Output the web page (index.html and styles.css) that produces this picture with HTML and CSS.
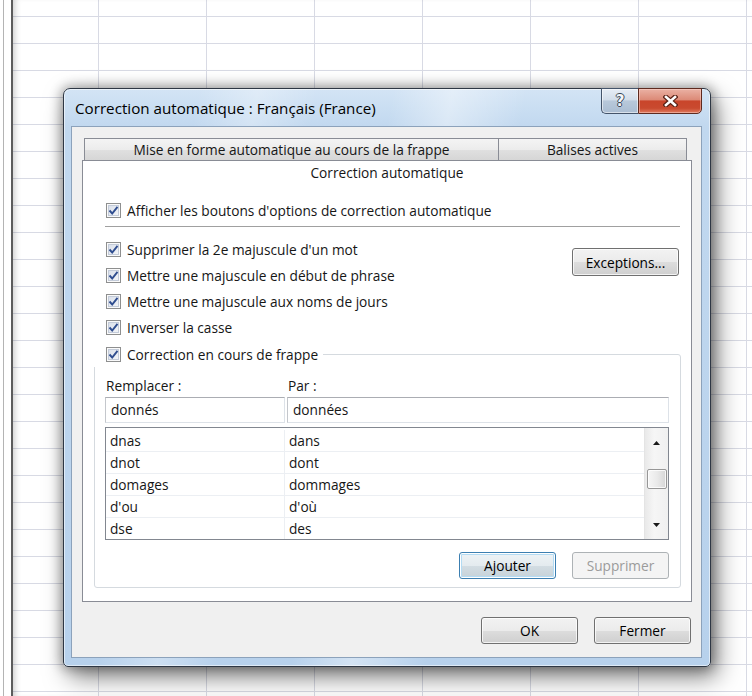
FILE: index.html
```html
<!DOCTYPE html>
<html lang="fr">
<head>
<meta charset="utf-8">
<title>Correction automatique</title>
<link rel="stylesheet" href="styles.css">
</head>
<body>
<div class="desktop">
  <div class="edge"></div>
  <div class="sheet"></div>

  <div class="dialog">
    <div class="titlebar">
      <span class="title">Correction automatique : Français (France)</span>
      <div class="caption">
        <div class="cap-btn cap-help"><span class="q">?</span></div>
        <div class="cap-btn cap-close">
          <svg width="15" height="12" viewBox="0 0 15 12"><path d="M3 2 L12 10 M12 2 L3 10" stroke="#5a2216" stroke-width="5" stroke-linecap="square" fill="none"/><path d="M3 2 L12 10 M12 2 L3 10" stroke="#ffffff" stroke-width="2.6" stroke-linecap="square" fill="none"/></svg>
        </div>
      </div>
    </div>

    <div class="client">
      <div class="tabs">
        <div class="tabrow">
          <div class="tab tab-1">Mise en forme automatique au cours de la frappe</div>
          <div class="tab tab-2">Balises actives</div>
        </div>
        <div class="panel">
          <div class="seltab">Correction automatique</div>
          <div class="pbody">
            <div class="chk first"><span class="box"><svg width="11" height="11" viewBox="0 0 11 11"><path d="M1.5 5.5 L4.2 8.5 L9.5 1.8" fill="none" stroke="#2f4d8f" stroke-width="1.9"/></svg></span><span>Afficher les boutons d'options de correction automatique</span></div>
            <div class="sep"></div>
            <div class="opts">
              <div class="opt-list">
                <div class="chk"><span class="box"><svg width="11" height="11" viewBox="0 0 11 11"><path d="M1.5 5.5 L4.2 8.5 L9.5 1.8" fill="none" stroke="#2f4d8f" stroke-width="1.9"/></svg></span><span>Supprimer la 2e majuscule d'un mot</span></div>
                <div class="chk"><span class="box"><svg width="11" height="11" viewBox="0 0 11 11"><path d="M1.5 5.5 L4.2 8.5 L9.5 1.8" fill="none" stroke="#2f4d8f" stroke-width="1.9"/></svg></span><span>Mettre une majuscule en début de phrase</span></div>
                <div class="chk"><span class="box"><svg width="11" height="11" viewBox="0 0 11 11"><path d="M1.5 5.5 L4.2 8.5 L9.5 1.8" fill="none" stroke="#2f4d8f" stroke-width="1.9"/></svg></span><span>Mettre une majuscule aux noms de jours</span></div>
                <div class="chk"><span class="box"><svg width="11" height="11" viewBox="0 0 11 11"><path d="M1.5 5.5 L4.2 8.5 L9.5 1.8" fill="none" stroke="#2f4d8f" stroke-width="1.9"/></svg></span><span>Inverser la casse</span></div>
              </div>
              <button class="btn btn-exc">Exceptions...</button>
            </div>

            <div class="group">
              <div class="chk legend"><span class="box"><svg width="11" height="11" viewBox="0 0 11 11"><path d="M1.5 5.5 L4.2 8.5 L9.5 1.8" fill="none" stroke="#2f4d8f" stroke-width="1.9"/></svg></span><span>Correction en cours de frappe</span></div>
              <div class="labels"><span class="lbl-1">Remplacer :</span><span class="lbl-2">Par :</span></div>
              <div class="inputs">
                <div class="input in-1">donnés</div>
                <div class="input in-2">données</div>
              </div>
              <div class="list">
                <div class="rows">
                  <div class="row"><span class="c1">dnas</span><span class="c2">dans</span></div>
                  <div class="row"><span class="c1">dnot</span><span class="c2">dont</span></div>
                  <div class="row"><span class="c1">domages</span><span class="c2">dommages</span></div>
                  <div class="row"><span class="c1">d'ou</span><span class="c2">d'où</span></div>
                  <div class="row"><span class="c1">dse</span><span class="c2">des</span></div>
                </div>
                <div class="scroll">
                  <div class="sb-up"><svg width="7" height="4" viewBox="0 0 7 4"><path d="M0 4 L3.5 0 L7 4 Z" fill="#1a1a1a"/></svg></div>
                  <div class="thumb"></div>
                  <div class="sb-fill"></div>
                  <div class="sb-down"><svg width="7" height="4" viewBox="0 0 7 4"><path d="M0 0 L3.5 4 L7 0 Z" fill="#1a1a1a"/></svg></div>
                </div>
              </div>
              <div class="grp-btns">
                <button class="btn btn-default">Ajouter</button>
                <button class="btn" disabled>Supprimer</button>
              </div>
            </div>
          </div>
        </div>
      </div>
      <div class="footer">
        <button class="btn">OK</button>
        <button class="btn">Fermer</button>
      </div>
    </div>
  </div>
</div>
</body>
</html>
```

FILE: styles.css
```css
* { box-sizing: border-box; }
html, body { margin: 0; padding: 0; }
body {
  width: 752px;
  height: 696px;
  overflow: hidden;
  font-family: "Open Sans", "Noto Sans", sans-serif;
  font-size: 13.7px;
  color: #161616;
}

.desktop {
  position: relative;
  display: flex;
  width: 752px;
  height: 696px;
  background: #fff;
}
.edge {
  width: 13px;
  flex: none;
  background: linear-gradient(to right, #fff 0 3px, #b4b4b4 3px 4px, #fff 4px 11px, #5c5c5c 11px 13px);
}
.sheet {
  flex: 1;
  background-color: #fff;
  background-image:
    linear-gradient(to right, #d8dae4 1px, transparent 1px),
    linear-gradient(to bottom, #d8dae4 1px, transparent 1px);
  background-size: 108px 100%, 100% 27px;
  background-position: 85px 0, 0 16px;
  box-shadow: inset 6px 0 6px -4px rgba(0,0,0,.2);
}

/* ---------- dialog window ---------- */
.dialog {
  position: absolute;
  left: 63px;
  top: 88px;
  width: 648px;
  height: 579px;
  border: 1px solid #2e3744;
  border-radius: 7px 7px 5px 5px;
  background:
    linear-gradient(100deg, rgba(255,255,255,0) 18%, rgba(255,255,255,.3) 26%, rgba(255,255,255,0) 34%, rgba(255,255,255,0) 44%, rgba(255,255,255,.4) 52%, rgba(255,255,255,0) 62%),
    linear-gradient(to bottom, #d3e4f5 0, #c1d8ef 38px, #b7d1ec 100%);
  box-shadow: 0 0 12px 2px rgba(0,0,0,.32), 6px 10px 24px rgba(0,0,0,.5), inset 0 0 0 1px rgba(255,255,255,.55);
  display: flex;
  flex-direction: column;
}
.titlebar {
  height: 37px;
  flex: none;
  display: flex;
  align-items: center;
  padding-left: 11px;
}
.title {
  font-size: 15.2px;
  color: #000;
}
.caption {
  margin-left: auto;
  margin-right: 8px;
  margin-top: -1px;
  align-self: flex-start;
  display: flex;
  height: 26px;
}
.cap-btn {
  height: 26px;
  display: flex;
  align-items: center;
  justify-content: center;
  border: 1px solid #44546a;
}
.cap-help {
  width: 37px;
  border-right: none;
  border-radius: 0 0 0 5px;
  background: linear-gradient(to bottom, #e6edf5 0, #d2dde9 45%, #b8c8da 50%, #aabdd2 100%);
  box-shadow: inset 0 0 0 1px rgba(255,255,255,.55);
}
.q {
  font-family: "DejaVu Sans", sans-serif;
  font-weight: bold;
  font-size: 15px;
  color: #f4f6f9;
  text-shadow: 1px 0 0 #3a4656, -1px 0 0 #3a4656, 0 1px 0 #3a4656, 0 -1px 0 #3a4656;
  line-height: 1;
}
.cap-close {
  width: 64px;
  border-color: #5e2a1f;
  border-radius: 0 0 5px 0;
  background: linear-gradient(to bottom, #eab1a4 0, #dc8a77 45%, #c9452b 50%, #c94a2f 80%, #e07b5f 100%);
  box-shadow: inset 0 0 0 1px rgba(255,220,210,.45);
}

/* ---------- client area ---------- */
.client {
  flex: 1;
  margin: 0 8px 8px 7px;
  border: 1px solid #8ca2bb;
  background: #f0f0f0;
  display: flex;
  flex-direction: column;
}
.tabs {
  margin: 11px 9px 0 10px;
}
.tabrow {
  display: flex;
  height: 22px;
  margin-left: 2px;
}
.tab {
  border: 1px solid #898c95;
  border-bottom: none;
  background: linear-gradient(to bottom, #f4f4f4 0, #ececec 50%, #e0e0e0 51%, #d6d6d6 100%);
  text-align: center;
  line-height: 21px;
  white-space: nowrap;
}
.tab-1 { width: 415px; }
.tab-2 { width: 189px; margin-left: -1px; }

.panel {
  height: 442px;
  border: 1px solid #898c95;
  background: #fff;
  display: flex;
  flex-direction: column;
}
.seltab {
  height: 24px;
  line-height: 24px;
  text-align: center;
}
.pbody {
  padding: 12px 10px 0 11px;
}

/* checkboxes */
.chk {
  display: flex;
  align-items: center;
  height: 26px;
  padding-left: 12px;
  white-space: nowrap;
}
.box {
  width: 15px;
  height: 15px;
  flex: none;
  margin-right: 6px;
  border: 1px solid #8e8f8f;
  background: #f5f5f5;
  display: flex;
  align-items: center;
  justify-content: center;
  box-shadow: inset 0 0 0 1px #fafafa, inset 0 0 0 2px #c3cbd9;
  background-image: linear-gradient(135deg, #d5dce8, #f7f8fa);
}
.box svg { display: block; }

.sep {
  height: 2px;
  margin: 3px 1px 8px 11px;
  border-top: 1px solid #a0a0a0;
  border-bottom: 1px solid #fff;
}
.opts {
  display: flex;
  justify-content: space-between;
  align-items: flex-start;
}
.opt-list { display: flex; flex-direction: column; }

/* buttons */
.btn {
  width: 97px;
  height: 27px;
  padding: 0;
  font: inherit;
  color: #000;
  border: 1px solid #707070;
  border-radius: 3px;
  background: linear-gradient(to bottom, #f2f2f2 0, #ebebeb 50%, #dddddd 51%, #cfcfcf 100%);
  box-shadow: inset 0 0 0 1px rgba(255,255,255,.75);
}
.btn-exc {
  width: 107px;
  height: 28px;
  margin-top: 12px;
  margin-right: 2px;
}
.btn-default {
  border-color: #3c7fb1;
  background: linear-gradient(to bottom, #eef3f6 0, #e4ebef 50%, #d3dde3 51%, #c6d2d9 100%);
  box-shadow: inset 0 0 0 1px #ffffff, inset 0 0 0 2px #b3dbf3;
}
.btn:disabled {
  border-color: #adb2b5;
  background: #f4f4f4;
  color: #9b9b9b;
  box-shadow: none;
}

/* group box */
.group {
  position: relative;
  margin-top: 14px;
  height: 234px;
  border: 1px solid #d5dadf;
  border-radius: 3px;
  padding: 20px 11px 0 10px;
}
.legend {
  position: absolute;
  top: -14px;
  left: -1px;
  height: 26px;
  padding-left: 12px;
  padding-right: 5px;
  background: #fff;
}
.labels {
  display: flex;
  height: 20px;
  align-items: center;
}
.lbl-1 { width: 183px; padding-left: 1px; }
.inputs {
  display: flex;
  margin-top: 2px;
  height: 26px;
}
.input {
  height: 26px;
  line-height: 24px;
  padding-left: 5px;
  background: #fff;
  border: 1px solid #dde2e8;
  border-top-color: #abadb3;
  border-left-color: #c4c7cc;
}
.in-1 { width: 180px; }
.in-2 { flex: 1; margin-left: 2px; }

.list {
  margin-top: 4px;
  height: 113px;
  border: 1px solid #828790;
  display: flex;
  background: #fff;
}
.rows {
  flex: 1;
  overflow: hidden;
  padding-top: 2px;
}
.row {
  display: flex;
  height: 22px;
  line-height: 21px;
  border-bottom: 1px solid #eceff3;
}
.row:last-child { height: 21px; border-bottom: none; }
.c1 {
  width: 179px;
  padding-left: 4px;
  border-right: 1px solid #eceff3;
}
.c2 { padding-left: 4px; }

.scroll {
  width: 24px;
  flex: none;
  display: flex;
  flex-direction: column;
  align-items: center;
  border-left: 1px solid #e4e4e4;
  background: linear-gradient(to right, #e9e9e9, #f6f6f6 40%, #f0f0f0);
}
.sb-up, .sb-down {
  display: flex;
  align-items: center;
  justify-content: center;
  width: 100%;
}
.sb-up { height: 30px; }
.sb-down { height: 28px; }
.sb-up svg, .sb-down svg { display: block; }
.thumb {
  margin-top: 11px;
  width: 20px;
  height: 20px;
  border: 1px solid #979797;
  border-radius: 2px;
  background: linear-gradient(to right, #f6f6f6 0, #eaeaea 50%, #d6d6d6 100%);
  box-shadow: inset 0 0 0 1px rgba(255,255,255,.8);
}
.sb-fill { flex: 1; }

.grp-btns {
  display: flex;
  justify-content: flex-end;
  gap: 16px;
  margin-top: 12px;
}

/* footer */
.footer {
  display: flex;
  justify-content: flex-end;
  gap: 16px;
  margin-top: 15px;
  padding-right: 10px;
}
```
